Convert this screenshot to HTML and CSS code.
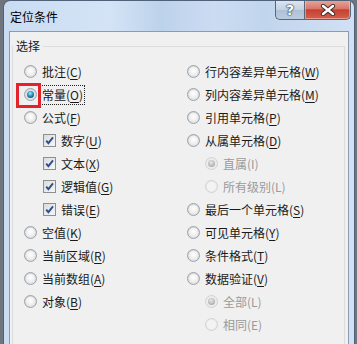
FILE: index.html
```html
<!DOCTYPE html>
<html lang="zh-CN">
<head>
<meta charset="utf-8">
<title>定位条件</title>
<link rel="stylesheet" href="styles.css">
</head>
<body>
<div class="win">
  <div class="titlebar">
    <span class="title">定位条件</span>
    <div class="caption-btns">
      <span class="cbtn help">?</span>
      <span class="cbtn close"><svg width="16" height="12" viewBox="0 0 16 12"><path d="M3 2 L13 10 M13 2 L3 10" stroke="#3a2a28" stroke-width="4.2" stroke-linecap="round"/><path d="M3 2 L13 10 M13 2 L3 10" stroke="#ffffff" stroke-width="2.4" stroke-linecap="round"/></svg></span>
    </div>
  </div>
  <div class="client">
    <fieldset class="group">
      <legend class="legend">选择</legend>
      <div class="cols">
        <div class="col">
          <div class="row"><span class="radio"></span><span class="lbl">批注(<u>C</u>)</span></div>
          <div class="row"><span class="radio checked hl"></span><span class="lbl focus">常量(<u>O</u>)</span></div>
          <div class="row"><span class="radio"></span><span class="lbl">公式(<u>F</u>)</span></div>
          <div class="row sub"><span class="check"><svg width="11" height="11" viewBox="0 0 11 11"><path d="M2.2 5.6 L4.4 8.2 L9 2.4" fill="none" stroke="#2d4f8e" stroke-width="1.9"/></svg></span><span class="lbl">数字(<u>U</u>)</span></div>
          <div class="row sub"><span class="check"><svg width="11" height="11" viewBox="0 0 11 11"><path d="M2.2 5.6 L4.4 8.2 L9 2.4" fill="none" stroke="#2d4f8e" stroke-width="1.9"/></svg></span><span class="lbl">文本(<u>X</u>)</span></div>
          <div class="row sub"><span class="check"><svg width="11" height="11" viewBox="0 0 11 11"><path d="M2.2 5.6 L4.4 8.2 L9 2.4" fill="none" stroke="#2d4f8e" stroke-width="1.9"/></svg></span><span class="lbl">逻辑值(<u>G</u>)</span></div>
          <div class="row sub"><span class="check"><svg width="11" height="11" viewBox="0 0 11 11"><path d="M2.2 5.6 L4.4 8.2 L9 2.4" fill="none" stroke="#2d4f8e" stroke-width="1.9"/></svg></span><span class="lbl">错误(<u>E</u>)</span></div>
          <div class="row"><span class="radio"></span><span class="lbl">空值(<u>K</u>)</span></div>
          <div class="row"><span class="radio"></span><span class="lbl">当前区域(<u>R</u>)</span></div>
          <div class="row"><span class="radio"></span><span class="lbl">当前数组(<u>A</u>)</span></div>
          <div class="row"><span class="radio"></span><span class="lbl">对象(<u>B</u>)</span></div>
        </div>
        <div class="col">
          <div class="row"><span class="radio"></span><span class="lbl">行内容差异单元格(<u>W</u>)</span></div>
          <div class="row"><span class="radio"></span><span class="lbl">列内容差异单元格(<u>M</u>)</span></div>
          <div class="row"><span class="radio"></span><span class="lbl">引用单元格(<u>P</u>)</span></div>
          <div class="row"><span class="radio"></span><span class="lbl">从属单元格(<u>D</u>)</span></div>
          <div class="row sub2 disabled"><span class="radio checked"></span><span class="lbl">直属(I)</span></div>
          <div class="row sub2 disabled"><span class="radio"></span><span class="lbl">所有级别(L)</span></div>
          <div class="row"><span class="radio"></span><span class="lbl">最后一个单元格(<u>S</u>)</span></div>
          <div class="row"><span class="radio"></span><span class="lbl">可见单元格(<u>Y</u>)</span></div>
          <div class="row"><span class="radio"></span><span class="lbl">条件格式(<u>T</u>)</span></div>
          <div class="row"><span class="radio"></span><span class="lbl">数据验证(<u>V</u>)</span></div>
          <div class="row sub2 disabled"><span class="radio checked"></span><span class="lbl">全部(L)</span></div>
          <div class="row sub2 disabled"><span class="radio"></span><span class="lbl">相同(E)</span></div>
        </div>
      </div>
    </fieldset>
  </div>
</div>
</body>
</html>
```
FILE: styles.css
```css
html, body {
  margin: 0;
  padding: 0;
}
body {
  width: 357px;
  height: 344px;
  overflow: hidden;
  background: #6f757c;
  font-family: "Noto Sans CJK SC", "Noto Sans", sans-serif;
  font-size: 12px;
  color: #1a1a1a;
}
.win {
  margin-left: 3px;
  width: 352px;
  height: 344px;
  box-sizing: border-box;
  border: 1px solid #50627a;
  border-bottom: none;
  border-radius: 7px 7px 0 0;
  background: linear-gradient(90deg, #cadcf2 0, #d4e4f6 30%, #bdd2eb 45%, #cbdcf2 60%, #c1d5ed 75%, #d1e1f5 100%);
  padding: 0 5px;
  display: flex;
  flex-direction: column;
  overflow: hidden;
}
.titlebar {
  height: 30px;
  flex: none;
  display: flex;
  align-items: center;
  padding-left: 1px;
}
.title {
  color: #000;
  font-size: 12px;
  line-height: 16px;
  margin-top: 2px;
}
.caption-btns {
  margin-left: auto;
  margin-right: -2px;
  align-self: flex-start;
  margin-top: -1px;
  display: flex;
  height: 20px;
}
.cbtn {
  height: 20px;
  box-sizing: border-box;
  border: 1px solid #5a6778;
  border-top: none;
  display: flex;
  align-items: center;
  justify-content: center;
}
.help {
  width: 29px;
  border-radius: 0 0 0 5px;
  border-right: none;
  background: linear-gradient(#dfe7f1 0, #c5d2e2 50%, #afc0d5 51%, #bccce0 100%);
  color: #fff;
  font-family: "DejaVu Sans", sans-serif;
  font-weight: bold;
  font-size: 14px;
  text-shadow: 0 0 1px #2c3a4e, 0 0 1px #2c3a4e, 0 0 2px #2c3a4e;
}
.close {
  width: 47px;
  border-radius: 0 0 5px 0;
  background: linear-gradient(#e9a89c 0, #d9786a 45%, #c5412f 52%, #d2604e 100%);
  box-shadow: inset 0 0 0 1px rgba(255,210,200,0.5);
}
.client {
  flex: 1;
  min-height: 0;
  overflow: hidden;
  border: 1px solid #8b9bb0;
  border-bottom: none;
  background: #f0f0f0;
}
.group {
  margin: 6px 3px 0 2px;
  padding: 0 0 20px 0;
  border: 1px solid #dcdcdc;
}
.legend {
  padding: 0 3px;
  margin-left: 0;
  line-height: 16px;
  font-size: 12px;
  color: #1a1a1a;
}
.cols {
  display: grid;
  grid-template-columns: 163px 1fr;
  padding: 6px 0 0 11px;
}
.col {
  display: flex;
  flex-direction: column;
}
.row {
  height: 23px;
  display: flex;
  align-items: center;
  gap: 5px;
  line-height: 16px;
}
.row.sub {
  padding-left: 19px;
}
.row.sub2 {
  padding-left: 18px;
}
.lbl u {
  text-decoration: underline;
  text-underline-offset: 2px;
}
.disabled .lbl {
  color: #9a9a9a;
}
.radio {
  position: relative;
  flex: none;
  width: 13px;
  height: 13px;
  box-sizing: border-box;
  border-radius: 50%;
  border: 1px solid #9ba3ab;
  background: radial-gradient(circle at 50% 55%, #f4f4f4 0, #e6e6e6 45%, #c9c9c9 100%);
}
.radio::after {
  content: "";
  position: absolute;
  left: 1px;
  top: 1px;
  width: 9px;
  height: 9px;
  border-radius: 50%;
  background: radial-gradient(circle at 50% 40%, #ffffff 0, #eeeeee 60%, #dadada 100%);
}
.radio.checked::after {
  left: 2px;
  top: 2px;
  width: 7px;
  height: 7px;
  background: radial-gradient(circle at 45% 35%, #b8ecff 0, #3ca6d2 35%, #106389 70%, #0b3a55 100%);
}
.disabled .radio {
  border-color: #cfd3d7;
  background: #ececec;
}
.disabled .radio::after {
  background: #f3f3f3;
}
.disabled .radio.checked::after {
  background: radial-gradient(circle at 45% 35%, #e8e8e8 0, #b8b8b8 60%, #9d9d9d 100%);
}
.radio.hl::before {
  content: "";
  position: absolute;
  left: -9px;
  top: -6px;
  width: 19px;
  height: 19px;
  border: 3px solid #e3222c;
}
.focus {
  outline: 1px dotted #222;
  outline-offset: 1px;
}
.check {
  flex: none;
  width: 13px;
  height: 13px;
  box-sizing: border-box;
  border: 1px solid #8e8f8f;
  background: linear-gradient(135deg, #dcdcdc 0, #f6f6f6 100%);
  display: flex;
  align-items: center;
  justify-content: center;
}
.check svg {
  display: block;
}
```
